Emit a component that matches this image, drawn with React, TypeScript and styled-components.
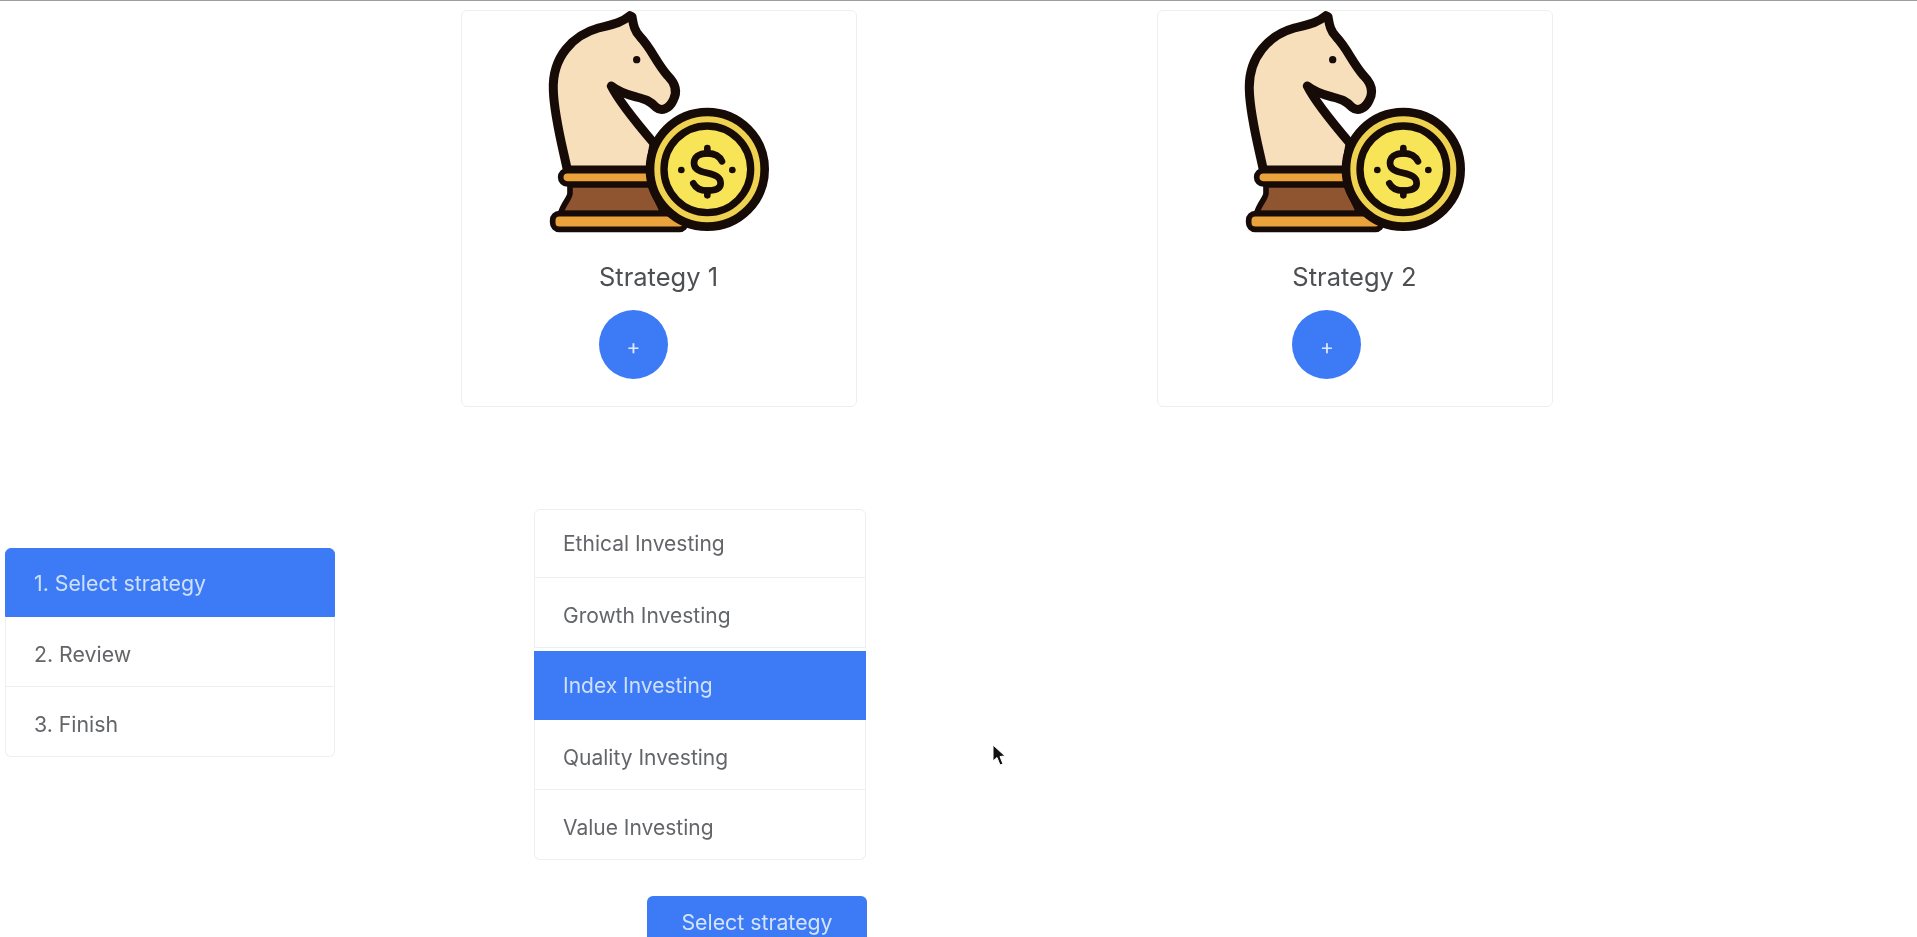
import styled, { createGlobalStyle } from 'styled-components';

const GlobalStyle = createGlobalStyle`
  html, body {
    margin: 0;
    padding: 0;
    background: #fff;
    overflow: hidden;
  }
  body {
    font-family: Inter, "Liberation Sans", sans-serif;
  }
`;

const BLUE = '#3c7bf5';

const Page = styled.div`
  position: relative;
  width: 1917px;
  height: 937px;
  overflow: hidden;
  border-top: 1px solid #9a9ea3;
  box-sizing: border-box;
  filter: blur(0.5px);
`;

const CardRow = styled.section`
  display: flex;
  gap: 300px;
  padding: 9px 0 0 461px;
`;

const Card = styled.article`
  width: 396px;
  height: 397px;
  box-sizing: border-box;
  border: 1px solid #eeeeef;
  border-radius: 6px;
  display: flex;
  flex-direction: column;
  align-items: center;
`;

const CardArt = styled.svg`
  width: 250px;
  height: 240px;
  display: block;
  margin: -11px 0 0 -8px;
  flex: none;
`;

const CardBody = styled.div`
  display: flex;
  flex-direction: column;
  align-items: flex-start;
  margin: 22px 1px 0 0;
`;

const CardTitle = styled.h3`
  margin: 0;
  font-size: 25.5px;
  line-height: 30px;
  font-weight: 400;
  color: #4d4f53;
`;

const AddButton = styled.button`
  width: 69px;
  height: 69px;
  margin: 18px 0 0;
  padding: 3px 0 0;
  border: 0;
  border-radius: 50%;
  background: ${BLUE};
  color: #dfe9fd;
  font: 400 21px/1 Inter, "Liberation Sans", sans-serif;
`;

const LowerRow = styled.section`
  display: flex;
  align-items: flex-start;
  margin-top: 102px;
  padding-left: 5px;
`;

const StepList = styled.ol`
  list-style: none;
  margin: 39px 0 0;
  padding: 0;
  width: 330px;
  font-size: 21.3px;
`;

const ChoiceColumn = styled.div`
  margin-left: 199px;
  width: 332px;
`;

const ChoiceList = styled.ul`
  list-style: none;
  margin: 0;
  padding: 0;
  font-size: 21px;
`;

const Row = styled.li<{ $active?: boolean }>`
  height: ${p => (p.$active ? 69 : 70)}px;
  box-sizing: border-box;
  padding: ${p => (p.$active ? 0 : 5)}px 0 0 28px;
  display: flex;
  align-items: center;
  color: ${p => (p.$active ? '#cfe0fd' : '#636569')};
  background: ${p => (p.$active ? BLUE : '#fff')};
  border: 1px solid ${p => (p.$active ? BLUE : '#efeff1')};
  border-top-width: 0;
  margin-top: ${p => (p.$active ? 3 : 0)}px;

  &:first-child {
    height: 69px;
    margin-top: 0;
    padding-top: 0;
    border-top-width: 1px;
    border-radius: 6px 6px 0 0;
  }
  &:last-child {
    border-radius: 0 0 6px 6px;
  }
`;

const SubmitButton = styled.button`
  display: block;
  width: 220px;
  height: 70px;
  margin: 36px 0 0 113px;
  padding: 0 0 18px;
  border: 0;
  border-radius: 6px;
  background: ${BLUE};
  color: #d5e3fd;
  font: 400 21.3px Inter, "Liberation Sans", sans-serif;
`;

const Cursor = styled.svg`
  position: absolute;
  left: 992px;
  top: 743px;
  width: 14px;
  height: 24px;
`;

// traced on a 3x grid: 750x720 maps onto the 250x240 picture
function KnightCoin() {
  return (
    <CardArt viewBox="0 0 750 720">
      <g stroke="#170b08" strokeWidth="27" strokeLinejoin="round" strokeLinecap="round">
        <path
          fill="#f8dfbb"
          d="M112 510 C100 450 72 350 70 270 C66 170 130 105 205 84 C240 74 270 72 300 47 L306 50 C310 72 312 92 330 110 C365 147 378 187 413 227 C438 252 443 275 430 300 C418 326 395 336 378 322 C358 300 345 298 315 290 C285 282 262 272 244 258 C265 300 325 375 372 430 L360 510 Z"
        />
        <path
          fill="#8f5531"
          strokeWidth="17"
          d="M120 555 L120 580 C120 595 100 610 92 640 L400 640 L360 555 Z"
        />
        <rect x="92" y="512" width="298" height="40" rx="20" fill="#eaa33a" strokeWidth="17" />
        <rect x="68" y="641" width="400" height="47" rx="20" fill="#eaa33a" strokeWidth="17" />
        <circle cx="532" cy="508" r="172" fill="#efd24f" strokeWidth="26" />
        <circle cx="532" cy="508" r="130" fill="#f8e457" strokeWidth="22" />
      </g>
      <g fill="none" stroke="#170b08" strokeWidth="20" strokeLinecap="round">
        <path d="M576 484 C568 466 554 460 532 460 C507 460 492 472 492 489 C492 510 512 514 532 519 C554 524 572 530 572 550 C572 566 555 572 532 572 C510 572 498 565 490 550" />
        <path d="M532 444 V460 M532 572 V586" />
      </g>
      <circle cx="320" cy="179" r="11" fill="#170b08" />
      <circle cx="454" cy="510" r="10" fill="#170b08" />
      <circle cx="607" cy="510" r="10" fill="#170b08" />
    </CardArt>
  );
}

const strategies = ['Strategy 1', 'Strategy 2'];
const steps = ['1. Select strategy', '2. Review', '3. Finish'];
const choices = ['Ethical Investing', 'Growth Investing', 'Index Investing', 'Quality Investing', 'Value Investing'];

export default function App() {
  return (
    <Page>
      <GlobalStyle />
      <CardRow>
        {strategies.map(name => (
          <Card key={name}>
            <KnightCoin />
            <CardBody>
              <CardTitle>{name}</CardTitle>
              <AddButton>+</AddButton>
            </CardBody>
          </Card>
        ))}
      </CardRow>
      <LowerRow>
        <StepList>
          {steps.map((s, i) => (
            <Row key={s} $active={i === 0}>{s}</Row>
          ))}
        </StepList>
        <ChoiceColumn>
          <ChoiceList>
            {choices.map(c => (
              <Row key={c} $active={c === 'Index Investing'}>{c}</Row>
            ))}
          </ChoiceList>
          <SubmitButton>Select strategy</SubmitButton>
        </ChoiceColumn>
      </LowerRow>
      <Cursor viewBox="0 0 14 24">
        <path d="M1 1 L1 17 L5 13.5 L8 21 L11 20 L8 12.5 L13 12 Z" fill="#111" stroke="#fff" strokeWidth="1" />
      </Cursor>
    </Page>
  );
}
